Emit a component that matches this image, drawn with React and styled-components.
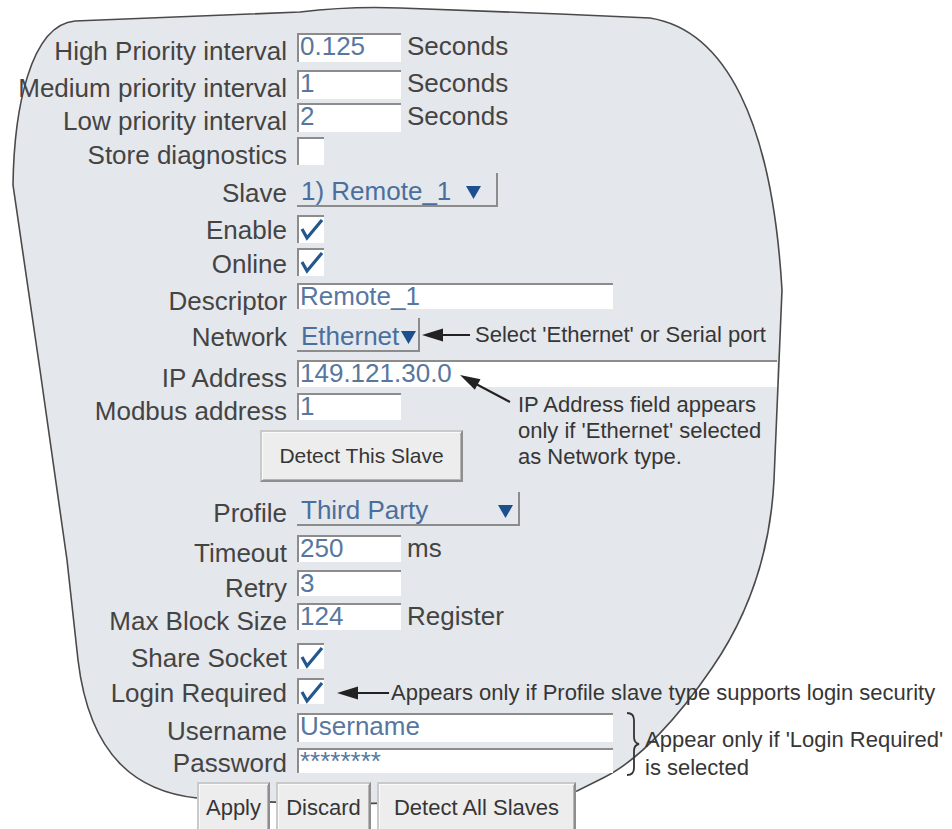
import styled, { createGlobalStyle } from 'styled-components';

const GlobalStyle = createGlobalStyle`
  * { box-sizing: border-box; }
  body {
    margin: 0;
    background: #fff;
    font-family: 'Liberation Sans', Arial, sans-serif;
    color: #3f3f3f;
  }
`;

function DropArrow() {
  return (
    <svg width="15" height="14" viewBox="0 0 15 14">
      <polygon points="0,1 15,1 7.5,14" fill="#1d4f8e" />
    </svg>
  );
}

function Tick() {
  return (
    <svg width="25" height="25" viewBox="0 0 25 25">
      <polyline points="3,12 8,21 23,3" fill="none" stroke="#24568f" strokeWidth="3.2" />
    </svg>
  );
}

function Pointer({ length }) {
  return (
    <svg width={length} height="14" viewBox={`0 0 ${length} 14`}>
      <polygon points="0,7 21,0.5 21,13.5" fill="#222" />
      <line x1="20" y1="7" x2={length} y2="7" stroke="#222" strokeWidth="2" />
    </svg>
  );
}

function SlantPointer() {
  return (
    <svg width="54" height="32" viewBox="0 0 54 32">
      <polygon points="2,2 16.8,16.8 22.5,6.2" fill="#222" />
      <line x1="18" y1="11" x2="52" y2="29" stroke="#222" strokeWidth="2" />
    </svg>
  );
}

function Brace() {
  return (
    <svg width="15" height="64" viewBox="0 0 15 64">
      <path
        d="M2 1 Q9 1 9 8 L9 25 Q9 31 14 32 Q9 33 9 39 L9 56 Q9 63 2 63"
        fill="none"
        stroke="#333"
        strokeWidth="1.8"
      />
    </svg>
  );
}

function App() {
  return (
    <Page>
      <GlobalStyle />
      <Outline width="952" height="829" viewBox="0 0 952 829">
        <path
          d="M75 21 L300 12 Q350 6 400 8 L560 14 L650 18
             C725 30 772 120 782 290 L774 480
             C770 560 745 620 712 668 C680 715 640 760 603 778
             L577 791 Q390 812 197 798
             C140 792 90 760 78 660 L67 560 L40 370 L13 185
             C14 110 30 25 75 21 Z"
          fill="#e4e7eb"
          stroke="#4a4a4a"
          strokeWidth="1.6"
        />
      </Outline>

      <Form>
        <Row $h={37}>
          <Label>High Priority interval</Label>
          <Field $w={104}>0.125</Field>
          <Unit>Seconds</Unit>
        </Row>
        <Row $h={33}>
          <Label>Medium priority interval</Label>
          <Field $w={104}>1</Field>
          <Unit>Seconds</Unit>
        </Row>
        <Row $h={34}>
          <Label>Low priority interval</Label>
          <Field $w={104}>2</Field>
          <Unit>Seconds</Unit>
        </Row>
        <Row $h={36}>
          <Label>Store diagnostics</Label>
          <Check />
        </Row>
        <Row $h={42}>
          <Label $pt={5}>Slave</Label>
          <Select $w={201} $pr={15}>
            <span>1) Remote_1</span>
            <DropArrow />
          </Select>
        </Row>
        <Row $h={33}>
          <Label $pt={0}>Enable</Label>
          <Check><Tick /></Check>
        </Row>
        <Row $h={35}>
          <Label $pt={1}>Online</Label>
          <Check><Tick /></Check>
        </Row>
        <Row $h={35}>
          <Label>Descriptor</Label>
          <Field $w={316} $h={26}>Remote_1</Field>
        </Row>
        <Row $h={42}>
          <Label $pt={4}>Network</Label>
          <Select $w={123} $pr={2}>
            <span>Ethernet</span>
            <DropArrow />
          </Select>
          <PointerSlot $top={10} $left={2}>
            <Pointer length={48} />
          </PointerSlot>
          <Note $top={4} $left={5}>Select 'Ethernet' or Serial port</Note>
        </Row>
        <Row $h={33}>
          <Label>IP Address</Label>
          <Field $w={480} $h={27}>149.121.30.0</Field>
          <Callout>
            <SlantPointer />
            <Note $top={19} $left={6}>
              IP Address field appears
              <br />
              only if 'Ethernet' selected
              <br />
              as Network type.
            </Note>
          </Callout>
        </Row>
        <Row $h={37}>
          <Label>Modbus address</Label>
          <Field $w={104} $h={27}>1</Field>
        </Row>
        <ButtonBar $h={62} $indent={260}>
          <Button $w={203} $h={52} $fs={21}>Detect This Slave</Button>
        </ButtonBar>
        <Row $h={43}>
          <Label $pt={6}>Profile</Label>
          <Select $w={223} $pr={5}>
            <span>Third Party</span>
            <DropArrow />
          </Select>
        </Row>
        <Row $h={35}>
          <Label>Timeout</Label>
          <Field $w={104} $h={27}>250</Field>
          <Unit>ms</Unit>
        </Row>
        <Row $h={33}>
          <Label>Retry</Label>
          <Field $w={104} $h={26}>3</Field>
        </Row>
        <Row $h={40}>
          <Label>Max Block Size</Label>
          <Field $w={104} $h={27}>124</Field>
          <Unit>Register</Unit>
        </Row>
        <Row $h={35}>
          <Label $pt={-1}>Share Socket</Label>
          <Check $h={26}><Tick /></Check>
        </Row>
        <Row $h={35}>
          <Label $pt={-1}>Login Required</Label>
          <Check $h={26}><Tick /></Check>
          <PointerSlot $top={8} $left={13}>
            <Pointer length={52} />
          </PointerSlot>
          <Note $top={2} $left={2}>Appears only if Profile slave type supports login security</Note>
        </Row>
        <LoginGroup>
          <Stack>
            <Row $h={35}>
              <Label>Username</Label>
              <Field $w={316}>Username</Field>
            </Row>
            <Row $h={30}>
              <Label $pt={-1}>Password</Label>
              <Field $w={316} $h={25}>********</Field>
            </Row>
          </Stack>
          <PointerSlot $top={-1} $left={12}>
            <Brace />
          </PointerSlot>
          <Note $top={13} $left={5} $lh={28}>
            Appear only if 'Login Required'
            <br />
            is selected
          </Note>
        </LoginGroup>
        <ButtonBar $h={51} $indent={197} $gap={6}>
          <Button $w={73} $h={51}>Apply</Button>
          <Button $w={95} $h={51}>Discard</Button>
          <Button $w={199} $h={51}>Detect All Slaves</Button>
        </ButtonBar>
      </Form>
    </Page>
  );
}

export default App;

const Page = styled.div`
  position: relative;
  width: 952px;
  height: 829px;
  overflow: hidden;
  background: #fff;
`;

const Outline = styled.svg`
  position: absolute;
  left: 0;
  top: 0;
  z-index: 0;
`;

const Form = styled.div`
  position: relative;
  z-index: 1;
  display: flex;
  flex-direction: column;
  padding-top: 33px;
`;

const Row = styled.div`
  position: relative;
  display: flex;
  align-items: flex-start;
  height: ${(p) => p.$h}px;
  flex-shrink: 0;
`;

const Label = styled.div`
  width: 287px;
  margin-right: 10px;
  padding-top: ${(p) => (p.$pt ?? 3)}px;
  text-align: right;
  font-size: 26px;
  line-height: 30px;
  color: #444;
  white-space: nowrap;
  flex-shrink: 0;
`;

const Field = styled.div`
  width: ${(p) => p.$w}px;
  height: ${(p) => p.$h || 29}px;
  flex-shrink: 0;
  background: #fff;
  border-top: 2px solid #8c8c8c;
  border-left: 2px solid #8c8c8c;
  padding-left: 1px;
  font-size: 26px;
  line-height: 22px;
  color: #58779f;
  white-space: nowrap;
`;

const Unit = styled.div`
  margin-left: 6px;
  font-size: 26px;
  line-height: 26px;
  color: #444;
  white-space: nowrap;
`;

const Check = styled.div`
  width: 27px;
  height: ${(p) => p.$h || 28}px;
  flex-shrink: 0;
  background: #fff;
  border-top: 2px solid #8c8c8c;
  border-left: 2px solid #8c8c8c;
  svg {
    display: block;
  }
`;

const Select = styled.div`
  width: ${(p) => p.$w}px;
  height: 34px;
  flex-shrink: 0;
  display: flex;
  justify-content: space-between;
  align-items: flex-start;
  padding: 3px ${(p) => p.$pr}px 0 4px;
  border-right: 2px solid #8c8c8c;
  border-bottom: 2px solid #8c8c8c;
  font-size: 26px;
  line-height: 30px;
  color: #4a6f9e;
  white-space: nowrap;
  svg {
    margin-top: 9px;
    flex-shrink: 0;
  }
`;

const PointerSlot = styled.div`
  margin-top: ${(p) => p.$top}px;
  margin-left: ${(p) => p.$left}px;
  flex-shrink: 0;
  svg {
    display: block;
  }
`;

const Note = styled.div`
  margin-top: ${(p) => p.$top}px;
  margin-left: ${(p) => p.$left}px;
  font-size: 22px;
  line-height: ${(p) => p.$lh || 26}px;
  color: #363636;
  white-space: nowrap;
`;

const Callout = styled.div`
  position: absolute;
  left: 458px;
  top: 13px;
  display: flex;
  align-items: flex-start;
`;

const LoginGroup = styled.div`
  display: flex;
  align-items: flex-start;
  flex-shrink: 0;
`;

const Stack = styled.div`
  display: flex;
  flex-direction: column;
`;

const ButtonBar = styled.div`
  display: flex;
  align-items: flex-start;
  gap: ${(p) => p.$gap || 0}px;
  height: ${(p) => p.$h}px;
  padding-left: ${(p) => p.$indent}px;
  flex-shrink: 0;
`;

const Button = styled.div`
  width: ${(p) => p.$w}px;
  height: ${(p) => p.$h}px;
  display: flex;
  align-items: center;
  justify-content: center;
  background: #ededed;
  border: 2px solid;
  border-color: #c9c9c9 #8e8e8e #8e8e8e #c9c9c9;
  box-shadow: inset 1px 1px 0 #fafafa, inset -1px -1px 0 #b5b5b5;
  font-size: ${(p) => p.$fs || 22}px;
  color: #363636;
  white-space: nowrap;
`;
